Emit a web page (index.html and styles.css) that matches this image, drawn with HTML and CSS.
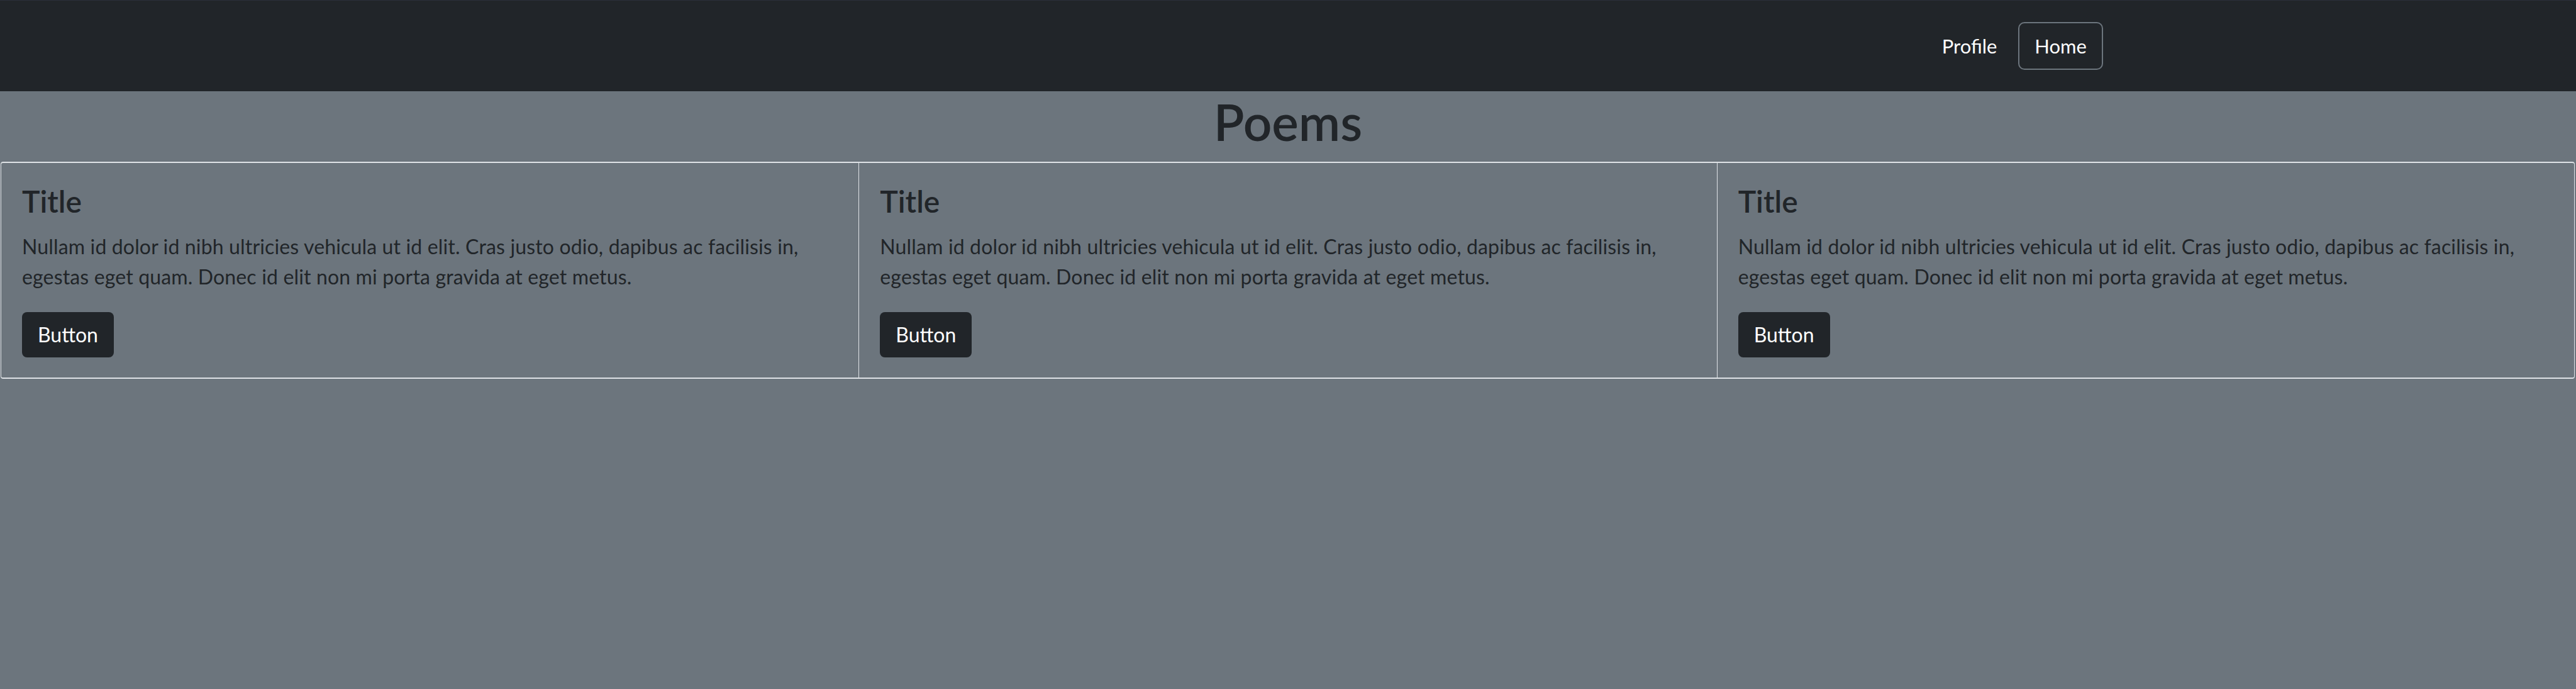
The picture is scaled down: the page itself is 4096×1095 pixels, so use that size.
FILE: index.html
```html
<!DOCTYPE html>
<html lang="en">
<head>
<meta charset="utf-8">
<title>Poems</title>
<link rel="stylesheet" href="styles.css">
</head>
<body>
<nav class="navbar">
  <div class="nav-container">
    <ul class="nav-list">
      <li><a class="nav-link" href="#">Profile</a></li>
      <li><a class="nav-link nav-outline" href="#">Home</a></li>
    </ul>
  </div>
</nav>
<main>
  <h1 class="page-title">Poems</h1>
  <div class="card-row">
    <div class="card">
      <h5 class="card-title">Title</h5>
      <p class="card-text">Nullam id dolor id nibh ultricies vehicula ut id elit. Cras justo odio, dapibus ac facilisis in, egestas eget quam. Donec id elit non mi porta gravida at eget metus.</p>
      <a class="btn" href="#">Button</a>
    </div>
    <div class="card">
      <h5 class="card-title">Title</h5>
      <p class="card-text">Nullam id dolor id nibh ultricies vehicula ut id elit. Cras justo odio, dapibus ac facilisis in, egestas eget quam. Donec id elit non mi porta gravida at eget metus.</p>
      <a class="btn" href="#">Button</a>
    </div>
    <div class="card">
      <h5 class="card-title">Title</h5>
      <p class="card-text">Nullam id dolor id nibh ultricies vehicula ut id elit. Cras justo odio, dapibus ac facilisis in, egestas eget quam. Donec id elit non mi porta gravida at eget metus.</p>
      <a class="btn" href="#">Button</a>
    </div>
  </div>
</main>
</body>
</html>
```
FILE: styles.css
```css
* { box-sizing: border-box; }
html, body { margin: 0; padding: 0; }
body {
  background: #6c757d;
  color: #212529;
  font-family: "Lato", "Open Sans", sans-serif;
  font-size: 31px;
  line-height: 48px;
}
.navbar {
  background: #212529;
  height: 145px;
  border-top: 1px solid #2b2f3a;
}
.nav-container {
  max-width: 2640px;
  height: 100%;
  margin: 0 auto;
  padding: 0 24px;
  display: flex;
  justify-content: flex-end;
  align-items: center;
}
.nav-list {
  list-style: none;
  margin: 0;
  padding: 0;
  display: flex;
  align-items: center;
}
.nav-link {
  display: block;
  color: #fff;
  text-decoration: none;
  padding: 12px 16px;
  line-height: 48px;
  border: 2px solid transparent;
}
.nav-outline {
  margin-left: 16px;
  padding: 12px 24px;
  border-color: #6c757d;
  border-radius: 10px;
}
.page-title {
  margin: 0 0 16px;
  text-align: center;
  font-size: 80px;
  font-weight: 600;
  line-height: 96px;
}
.card-row {
  display: grid;
  grid-template-columns: repeat(3, 1fr);
  padding-left: 1px;
  padding-right: 2px;
}
.card {
  border-top: 2px solid #dee2e6;
  border-bottom: 2px solid #dee2e6;
  border-left: 1px solid #dee2e6;
  padding: 32px 32px 32px 33px;
}
.card:first-child { border-top-left-radius: 4px; border-bottom-left-radius: 4px; }
.card:last-child {
  border-right: 1px solid #dee2e6;
  border-top-right-radius: 4px;
  border-bottom-right-radius: 4px;
}
.card-title {
  margin: 0 0 19px;
  font-size: 48px;
  font-weight: 600;
  line-height: 58px;
}
.card-text {
  margin: 0 0 32px;
  font-size: 32px;
  letter-spacing: 0.15px;
}
.btn {
  display: inline-block;
  background: #212529;
  color: #fff;
  text-decoration: none;
  padding: 12px 25px;
  font-size: 32px;
  line-height: 48px;
  border-radius: 8px;
}
```
